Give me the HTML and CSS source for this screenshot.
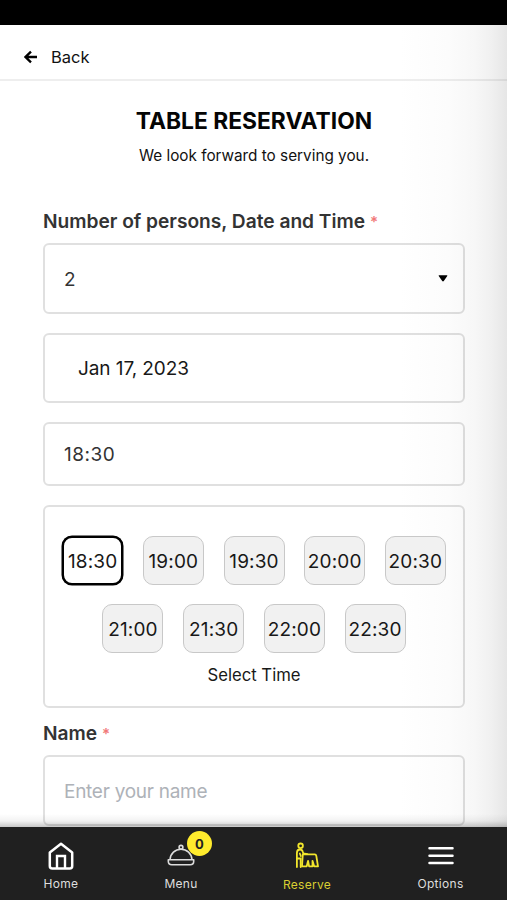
FILE: index.html
```html
<!DOCTYPE html>
<html lang="en">
<head>
<meta charset="utf-8">
<title>Table Reservation</title>
<link rel="stylesheet" href="styles.css">
</head>
<body>
<div class="screen">
  <div class="status"></div>
  <div class="page">
    <header class="header">
      <svg class="back-icon" width="14" height="14" viewBox="0 0 14 14"><path d="M13 7H1.800M7 1.600 1.500 7 7 12.400" fill="none" stroke="#000" stroke-width="2.300"/></svg>
      <span class="back">Back</span>
    </header>
    <main class="main">
      <h1 class="title">TABLE RESERVATION</h1>
      <p class="subtitle">We look forward to serving you.</p>
      <div class="label"><span class="label-text">Number of persons, Date and Time</span><span class="star">*</span></div>
      <div class="field select"><span>2</span><svg width="10" height="7" viewBox="0 0 10 7"><path d="M1.200.3h7.600q1.100 0 .3 1L5.800 6.100q-.8.800-1.600 0L.9 1.300Q.1.300 1.200.3z" fill="#000"/></svg></div>
      <div class="field date"><span>Jan 17, 2023</span></div>
      <div class="field time"><span>18:30</span></div>
      <section class="picker">
        <div class="slots">
          <div class="slot selected">18:30</div><div class="slot">19:00</div><div class="slot">19:30</div><div class="slot">20:00</div><div class="slot">20:30</div>
          <div class="slot">21:00</div><div class="slot">21:30</div><div class="slot">22:00</div><div class="slot">22:30</div>
        </div>
        <div class="pick-label">Select Time</div>
      </section>
      <div class="label name-label"><span class="label-text">Name</span><span class="star">*</span></div>
      <div class="field name"><span>Enter your name</span></div>
    </main>
  </div>
  <nav class="nav">
    <div class="tab">
      <svg width="26" height="28" viewBox="0 0 26 28" fill="none" stroke="#fff" stroke-width="2.500" stroke-linejoin="round"><path d="M1.800 10.500 13 1.800l11.200 8.700V24q0 2.500-2.500 2.500H4.300Q1.800 26.500 1.800 24z"/><path d="M9 26V14h8v12" stroke-width="2.400" stroke-linejoin="miter"/></svg>
      <span>Home</span>
    </div>
    <div class="tab">
      <div class="bell">
        <svg width="28" height="28" viewBox="0 0 28 28" fill="none" stroke="#dcdcdc" stroke-width="1.600"><path d="M3 17.500C3.500 11.500 8 7.300 14 7.300S24.500 11.500 25 17.500"/><circle cx="14" cy="5.300" r="1.900"/><path d="M1.300 17.700h25.400v1.500q0 3.500-3.500 3.500H4.800q-3.500 0-3.500-3.500z" stroke-linejoin="round"/></svg>
        <b class="badge">0</b>
      </div>
      <span>Menu</span>
    </div>
    <div class="tab active">
      <svg width="24" height="28" viewBox="0 0 24 28" fill="none" stroke="#f2e62c" stroke-width="1.800" stroke-linejoin="round" stroke-linecap="round"><circle cx="5.600" cy="3.800" r="2.300"/><path d="M1.900 25V11Q1.900 7.500 5 7.500q2.200 0 2.800 2.300l.5 1.700 4 .6M1.900 16.500h3.800V25M4.800 11.500l1 2.500"/><path d="M7.800 12.400h12q1.200 0 1.500 1.500L23 24.300h-3.800l-1.700-5.500v5.500h-3.400l-1-5.500-1.400 5.500H7z"/></svg>
      <span>Reserve</span>
    </div>
    <div class="tab">
      <svg width="26" height="28" viewBox="0 0 26 28" fill="none" stroke="#fff" stroke-width="2.500" stroke-linecap="round"><path d="M1.500 6.300h23M1.500 13.700h23M1.500 21h23"/></svg>
      <span>Options</span>
    </div>
  </nav>
</div>
</body>
</html>
```
FILE: styles.css
```css
* { box-sizing: border-box; }
body { margin: 0; font-family: Inter, "Liberation Sans", sans-serif; color: #111; }
.screen { height: 900px; overflow: hidden; display: flex; flex-direction: column; background: #fff; }
.status { height: 25px; flex: none; background: #000; }
.page {
  height: 802px; flex: none; overflow: hidden;
  background:
    linear-gradient(to top, rgba(0,0,0,.22), rgba(0,0,0,.05) 6px, transparent 13px),
    linear-gradient(to right, #fff 400px, #fcfcfc 448px, #f7f7f7 475px, #f0f0f0 492px, #e6e6e6 507px);
}
.header { height: 56px; display: flex; align-items: center; padding: 9px 0 0 24px; border-bottom: 2px solid rgba(0,0,0,.065); }
.back-icon { flex: none; }
.back { margin-left: 13px; font-size: 16.5px; line-height: 22px; }
.main { padding: 26px 42px 0 43px; }
.title { margin: 0; text-align: center; font-size: 22.8px; line-height: 28px; font-weight: 700; color: #050505; }
.subtitle { margin: 10px 0 0; text-align: center; font-size: 15.3px; line-height: 22px; }
.label { height: 26px; margin-top: 41px; display: flex; align-items: center; color: #333; }
.label-text { font-size: 19.15px; font-weight: 600; }
.star { margin-left: 5px; font-size: 15px; font-weight: 600; color: #f17878; }
.field { display: flex; align-items: center; padding: 0 19px; border: 2px solid rgba(0,0,0,.12); border-radius: 6px; font-size: 19px; color: #333; }
.select { height: 71px; margin-top: 9px; justify-content: space-between; padding-right: 15px; }
.select span { padding-top: 2px; }
.date { height: 70px; margin-top: 19px; padding: 1px 0 0 33px; color: #181818; letter-spacing: -.08px; }
.time { height: 64px; margin-top: 19px; letter-spacing: .5px; }
.picker { height: 203px; margin-top: 19px; padding-top: 29px; border: 2px solid rgba(0,0,0,.12); border-radius: 6px; }
.slots { display: flex; flex-wrap: wrap; justify-content: center; gap: 19px 19.7px; }
.slot { width: 61px; height: 49px; display: flex; align-items: center; justify-content: center; border: 1.5px solid #c8c8c8; border-radius: 10px; background: #f1f1f1; font-size: 19px; letter-spacing: .15px; padding-top: 1px; color: #181818; }
.selected { border: 2px solid #000; background: #fff; box-shadow: 0 0 0 .5px #000; }
.pick-label { margin-top: 11px; text-align: center; font-size: 16.7px; line-height: 22px; color: #181818; }
.name-label { margin-top: 12px; }
.name { height: 71px; margin-top: 9px; padding-top: 1px; color: #aeb2b8; letter-spacing: -.27px; }
.nav { height: 73px; flex: none; background: #202020; display: grid; grid-template-columns: 122px 118px 134px 133px; }
.tab { display: flex; flex-direction: column; align-items: center; padding-top: 15px; color: #dedede; font-size: 12px; line-height: 16px; letter-spacing: .3px; }
.tab span { margin-top: 6px; }
.active { color: #d9cf32; }
.active span { margin-top: 7px; }
.bell { position: relative; height: 28px; }
.badge { position: absolute; left: 20px; top: -11px; width: 25px; height: 25px; border-radius: 50%; background: #ffeb2d; color: #222; display: flex; align-items: center; justify-content: center; font-size: 13px; letter-spacing: 0; }
```
